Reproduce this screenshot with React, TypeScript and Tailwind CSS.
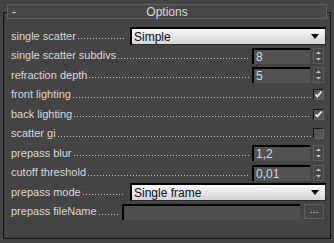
import React from "react";

const font = "font-['Liberation_Sans',Arial,sans-serif]";

const Leader = () => (
  <div className="mx-[2px] mt-[5px] h-[1px] flex-1 bg-[linear-gradient(to_right,#c2c6be_1px,transparent_1px)] bg-[length:3px_1px] bg-repeat-x" />
);

const Dropdown = ({ value }: { value: string }) => (
  <div className="ml-[3px] mr-[4px] flex h-[18px] w-[196px] shrink-0 items-center border-t-2 border-l-2 border-b border-r border-t-black border-l-black border-b-[#2a2a2a] border-r-[#2a2a2a] bg-linear-to-b from-[#fafafa] to-[#d4d4d4] pl-[2px] pr-[6px]">
    <span className="flex-1 text-[12px] leading-none text-[#0b0b2a]">{value}</span>
    <svg width="8" height="5" viewBox="0 0 8 5">
      <path d="M0 0 H8 L4 5 Z" fill="#000" />
    </svg>
  </div>
);

const SpinArrows = () => (
  <svg width="11" height="16" viewBox="0 0 11 16" className="shrink-0">
    <rect x="0.5" y="0.5" width="10" height="15" fill="#464646" stroke="#5c5c5c" />
    <path d="M3 6 H8 L5.5 3.5 Z" fill="#c8c8c8" />
    <path d="M3 10 H8 L5.5 12.5 Z" fill="#c8c8c8" />
  </svg>
);

const Spinner = ({ value }: { value: string }) => (
  <div className="mr-[6px] flex shrink-0 items-center gap-[3px]">
    <div className="flex h-[16px] w-[58px] items-center border-t-2 border-l-2 border-t-black border-l-black bg-[#525252] pl-[2px] text-[12px] leading-none text-[#cdd8e6]">
      {value}
    </div>
    <SpinArrows />
  </div>
);

const Check = ({ on }: { on?: boolean }) => (
  <div className="mr-[6px] flex h-[11px] w-[11px] shrink-0 items-center justify-center border-t border-l border-b border-r border-t-[#161616] border-l-[#161616] border-b-[#626262] border-r-[#626262] bg-[#555]">
    {on && (
      <svg width="9" height="9" viewBox="0 0 9 9">
        <path d="M1.5 4.5 L3.5 6.5 L7.5 1.5" fill="none" stroke="#f0f0f0" strokeWidth="1.8" />
      </svg>
    )}
  </div>
);

const Row = ({
  label,
  children,
  h = "h-[19.5px]",
}: {
  label: string;
  children: React.ReactNode;
  h?: string;
}) => (
  <div className={`flex items-center ${h}`}>
    <span className="whitespace-nowrap text-[11px] leading-none text-[#d8d8d8]">{label}</span>
    <Leader />
    {children}
  </div>
);

export default function App() {
  return (
    <div className={`h-[243px] w-[334px] bg-[#444444] pl-[3px] pt-[12px] ${font}`}>
      <div className="flex h-[227px] w-[328px] flex-col border border-[#161616] shadow-[inset_0_0_0_1px_#3a3a3a]">
        <div className="relative -mt-[9px] ml-[3px] mr-[3px] flex h-[15px] items-center border border-[#5e5e5e] bg-[#474747] text-[12px] leading-none text-[#dadada]">
          <span className="absolute left-[4px]">-</span>
          <span className="flex-1 text-center">Options</span>
        </div>
        <div className="mt-[7px] flex flex-col pl-[7px]">
          <Row label="single scatter" h="h-[20px]">
            <Dropdown value="Simple" />
          </Row>
          <Row label="single scatter subdivs">
            <Spinner value="8" />
          </Row>
          <Row label="refraction depth">
            <Spinner value="5" />
          </Row>
          <Row label="front lighting">
            <Check on />
          </Row>
          <Row label="back lighting">
            <Check on />
          </Row>
          <Row label="scatter gi">
            <Check />
          </Row>
          <Row label="prepass blur">
            <Spinner value="1,2" />
          </Row>
          <Row label="cutoff threshold">
            <Spinner value="0,01" />
          </Row>
          <Row label="prepass mode">
            <Dropdown value="Single frame" />
          </Row>
          <Row label="prepass fileName">
            <div className="ml-[1px] h-[16px] w-[178px] shrink-0 border-t-2 border-l-2 border-t-black border-l-black bg-[#4f4f4f]" />
            <div className="ml-[4px] mr-[6px] flex h-[15px] w-[20px] shrink-0 items-end justify-center border border-[#5e5e5e] bg-[#464646] pb-[3px] text-[11px] leading-none text-[#d0d0d0]">
              ...
            </div>
          </Row>
        </div>
      </div>
    </div>
  );
}
